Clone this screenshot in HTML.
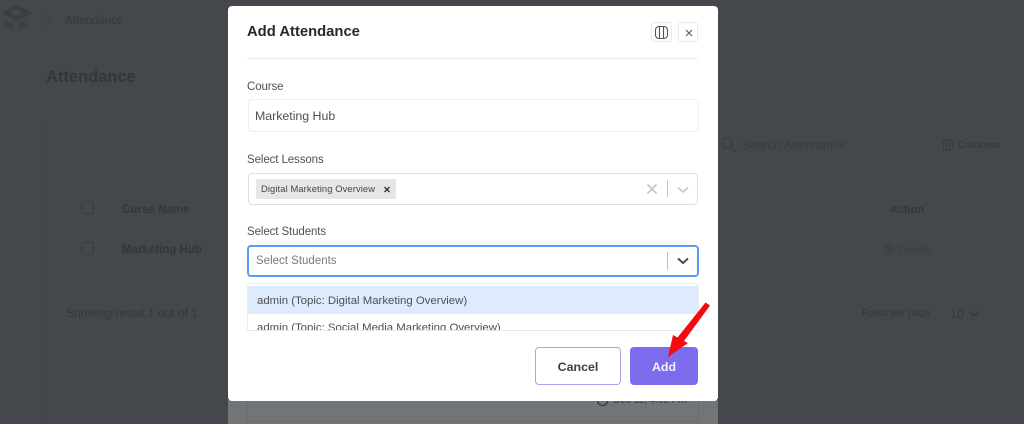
<!DOCTYPE html>
<html><head><meta charset="utf-8"><style>
html,body{margin:0;padding:0;width:1024px;height:424px;overflow:hidden;background:#44474c;font-family:"Liberation Sans",sans-serif}
.t{position:absolute;white-space:nowrap;line-height:16px}
.b{position:absolute;box-sizing:border-box}
.d{color:#35383e}
svg{position:absolute;overflow:visible}
.l{font-size:11.5px;color:#4e5158;letter-spacing:-.1px}
</style></head><body>
<svg style="left:0;top:0" width="60" height="40" fill="none"><path d="M16 4 32 13 16 21 2 13Z" fill="#3a3d44"/><path d="M16 9 22 13 16 16 10 13Z" fill="#44474c"/><path d="M5 19 14 24V31L5 26ZM27 19 18 24V31L27 26Z" fill="#3e4147"/><path d="M46 15 51 20 46 25" stroke="#3a3d43"/></svg>
<div class="t d" style="left:65px;top:12.500px;font-size:11.500px">Attendance</div>
<div class="t" style="left:46px;top:69px;font-size:16.500px;font-weight:bold;color:#33363d">Attendance</div>
<div class="b" style="left:46px;top:120px;width:0;height:304px;border-left:1px dotted #3e4146"></div>
<svg style="left:718px;top:135px" width="30" height="20" fill="none" stroke="#383b41" stroke-width="1.2"><circle cx="9" cy="8" r="5"/><path d="M13 12 18 17"/></svg>
<div class="t" style="left:742px;top:137px;font-size:12px;letter-spacing:.15px;color:#393c42">Search Attendance</div>
<svg style="left:943px;top:139px" width="12" height="12" fill="none" stroke="#383b41"><rect x=".5" y=".5" width="9" height="11" rx="2.5"/><path d="M3.500 1V11M6.500 1V11"/></svg>
<div class="t" style="left:958px;top:137.500px;font-size:10px;font-weight:bold;color:#383b41;letter-spacing:-.05px">Columns</div>
<div class="b" style="left:81px;top:201px;width:13px;height:13px;border:1px solid #383b41;border-radius:3px"></div>
<div class="b" style="left:81px;top:242px;width:13px;height:13px;border:1px solid #383b41;border-radius:3px"></div>
<div class="t" style="left:122px;top:202px;font-size:11.600px;font-weight:bold;color:#33363d">Curse Name</div>
<div class="t" style="left:122px;top:242px;font-size:11.500px;font-weight:bold;color:#33363d">Marketing Hub</div>
<div class="t" style="left:66px;top:305px;font-size:12px;color:#35383e">Showing result 1 out of 1</div>
<div class="t" style="left:890px;top:202px;font-size:11px;font-weight:bold;color:#33363d">Action</div>
<svg style="left:882px;top:244px" width="12" height="12" fill="none" stroke="#383b41"><circle cx="6" cy="6" r="4.500" stroke-dasharray="3 1"/><path d="M5 3 9 6 5 9Z"/></svg>
<div class="t" style="left:899px;top:242px;font-size:10.500px;color:#393c42">Details</div>
<div class="t" style="left:862px;top:306px;font-size:10.200px;color:#35383e">Rows per page</div>
<div class="t" style="left:950px;top:306px;font-size:12.500px;color:#35383e">10</div>
<svg style="left:968px;top:310px" width="12" height="8" fill="none" stroke="#35383e" stroke-width="1.3"><path d="M1 1 6 6 11 1"/></svg>

<div class="b" style="left:228px;top:400px;width:490px;height:24px;background:#727577"></div>
<div class="b" style="left:247px;top:401px;width:452px;height:21px;border-left:1px dotted #64676a;border-right:1px dotted #64676a;border-bottom:1px dotted #64676a"></div>
<svg style="left:596px;top:394px" width="14" height="14" fill="none" stroke="#35383c" stroke-width="1.2"><circle cx="6.500" cy="6.500" r="5"/></svg>
<div class="t" style="left:613px;top:393px;font-size:10px;color:#3c3f43">Dec 11, 4:05 PM</div>

<div class="b" style="left:228px;top:6px;width:490px;height:395px;background:#fff;border-radius:4px"></div>
<div class="t" style="left:247px;top:23px;font-size:14.800px;line-height:18px;font-weight:bold;color:#25282e">Add Attendance</div>
<div class="b" style="left:651px;top:22px;width:21px;height:20px;border:1px solid #e9eaec;border-radius:3px"></div>
<svg style="left:655px;top:25.500px" width="13" height="13" fill="none" stroke="#50545c" stroke-width="1.1"><rect x=".5" y=".5" width="12" height="12" rx="3.500"/><path d="M4.500 1V12M8.500 1V12"/></svg>
<div class="b" style="left:678px;top:22px;width:20px;height:20px;border:1px solid #e9eaec;border-radius:3px"></div>
<svg style="left:684.500px;top:28.500px" width="8" height="8" fill="none" stroke="#55585f" stroke-width="1.1"><path d="M1 1 7 7M7 1 1 7"/></svg>
<div class="b" style="left:247px;top:58px;width:451px;height:1px;background:#ececee"></div>

<div class="t l" style="left:247px;top:79px">Course</div>
<div class="b" style="left:248px;top:99px;width:451px;height:33px;border:1px solid #eeeef0;border-radius:4px"></div>
<div class="t" style="left:255px;top:108px;font-size:12.400px;color:#4c4f56;letter-spacing:-.03px">Marketing Hub</div>

<div class="t l" style="left:247px;top:152px">Select Lessons</div>
<div class="b" style="left:248px;top:173px;width:450px;height:32px;border:1px solid #dfe0e2;border-radius:4px"></div>
<div class="b" style="left:256px;top:179px;width:140px;height:20px;background:#e6e6e6;border-radius:2px"></div>
<div class="t" style="left:261px;top:180.500px;font-size:9.400px;color:#42454b;letter-spacing:.1px">Digital Marketing Overview</div>
<svg style="left:384px;top:185.500px" width="6" height="7" fill="none" stroke="#33363c" stroke-width="1.4"><path d="M.5 1 5.500 6M5.500 1 .5 6"/></svg>
<svg style="left:646px;top:183px" width="12" height="12" fill="none" stroke="#c4c5c7" stroke-width="1.6"><path d="M1.500 1.500 10.500 10.500M10.500 1.500 1.500 10.500"/></svg>
<div class="b" style="left:667px;top:180px;width:1px;height:17px;background:#c4c5c7"></div>
<svg style="left:677px;top:186px" width="12" height="8" fill="none" stroke="#c8c9cb" stroke-width="1.700"><path d="M1 1.500 6 6 11 1.500"/></svg>

<div class="t l" style="left:247px;top:224px">Select Students</div>
<div class="b" style="left:247px;top:245px;width:452px;height:32px;border:2px solid #5a9bf6;border-radius:4px"></div>
<div class="t" style="left:256px;top:253px;font-size:11.500px;color:#777a80">Select Students</div>
<div class="b" style="left:667px;top:252px;width:1px;height:18px;background:#bdbec1"></div>
<svg style="left:677px;top:257px" width="12" height="8" fill="none" stroke="#4a4d52" stroke-width="2"><path d="M1 1.500 6 6 11 1.500"/></svg>

<div class="b" style="left:247px;top:283px;width:452px;height:48px;border:1px solid #ececee;border-bottom:1px solid #e8e8ea;border-radius:4px 4px 0 0;overflow:hidden">
<div class="b" style="left:0;top:2px;width:450px;height:28px;background:#deebfd"></div>
<div class="t" style="left:9px;top:8.500px;font-size:11.400px;color:#4c4f56">admin (Topic: Digital Marketing Overview)</div>
<div class="t" style="left:9px;top:36px;font-size:11.400px;color:#4c4f56">admin (Topic: Social Media Marketing Overview)</div>
</div>

<div class="b" style="left:535px;top:347px;width:86px;height:38px;border:1px solid #a9a2f2;border-radius:4px;background:#fff"></div>
<div class="t" style="left:535px;top:358.500px;width:86px;text-align:center;font-size:12.400px;font-weight:bold;color:#3c3f46">Cancel</div>
<div class="b" style="left:630px;top:347px;width:68px;height:38px;background:#7d6cee;border-radius:4px"></div>
<div class="t" style="left:630px;top:358.500px;width:68px;text-align:center;font-size:12.400px;font-weight:bold;color:#f4f2fe">Add</div>
<svg style="left:660px;top:296px" width="60" height="64"><path d="M45.500 6.500 50 9.500 24 45 28 47 8 61 13 39 17.500 41.500Z" fill="#f40a0f"/></svg>
</body></html>
